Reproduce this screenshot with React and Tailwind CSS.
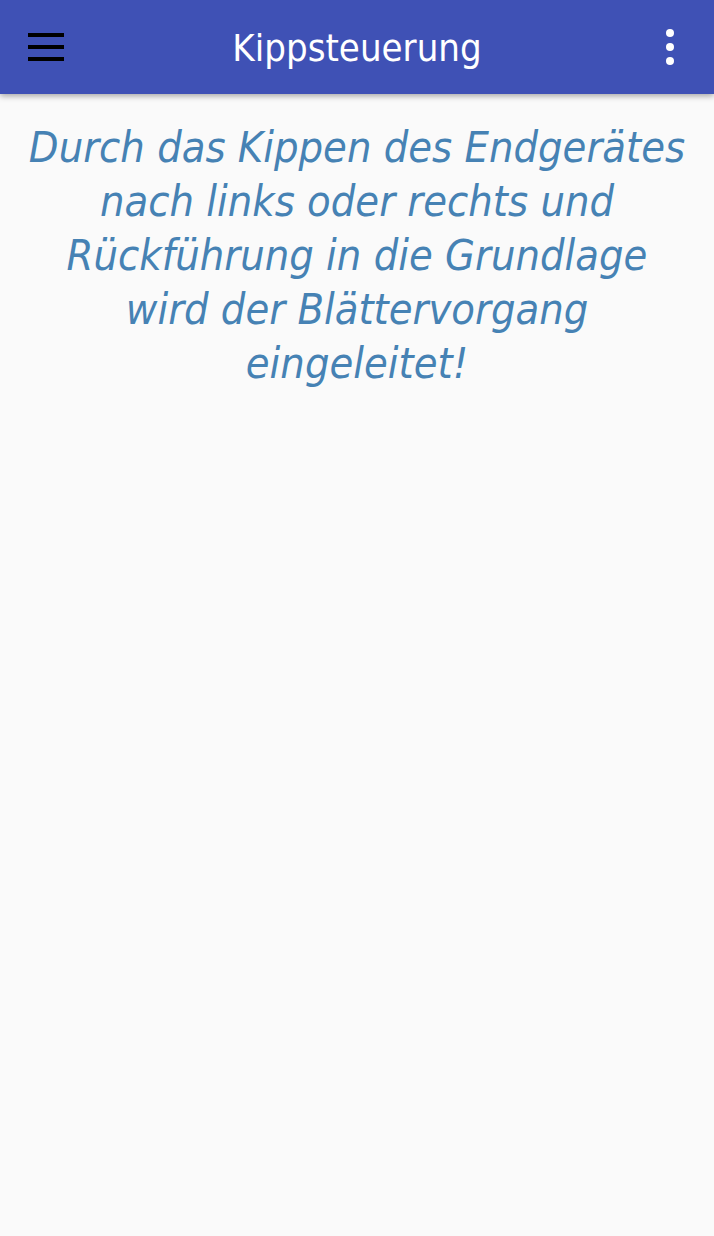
export default function App() {
  return (
    <div className="min-h-[1236px] bg-[#fafafa]">
      <header className="relative z-10 flex h-[94px] items-center bg-[#3f51b5] shadow-[0_2px_6px_rgba(0,0,0,0.35)]">
        <div className="flex w-[92px] items-center pl-[28px]">
          <button className="flex h-[28px] w-[36px] flex-col justify-between">
            <span className="block h-[4px] w-[36px] bg-black" />
            <span className="block h-[4px] w-[36px] bg-black" />
            <span className="block h-[4px] w-[36px] bg-black" />
          </button>
        </div>
        <h1 className="flex-1 pt-[2px] text-center font-['DejaVu_Sans_Condensed','DejaVu_Sans',sans-serif] text-[38px] leading-none text-white">
          Kippsteuerung
        </h1>
        <div className="flex w-[92px] items-center justify-end pr-[40px]">
          <button className="flex h-[36px] w-[8px] flex-col justify-between">
            <span className="block h-[8px] w-[8px] rounded-full bg-white" />
            <span className="block h-[8px] w-[8px] rounded-full bg-white" />
            <span className="block h-[8px] w-[8px] rounded-full bg-white" />
          </button>
        </div>
      </header>
      <main className="px-[20px] pt-[26px]">
        <p className="text-center font-['DejaVu_Sans_Condensed','DejaVu_Sans',sans-serif] text-[43px] italic leading-[54px] text-[#4682b4]">
          Durch das Kippen des Endgerätes nach links oder rechts und Rückführung in die Grundlage wird der Blättervorgang eingeleitet!
        </p>
      </main>
    </div>
  );
}
